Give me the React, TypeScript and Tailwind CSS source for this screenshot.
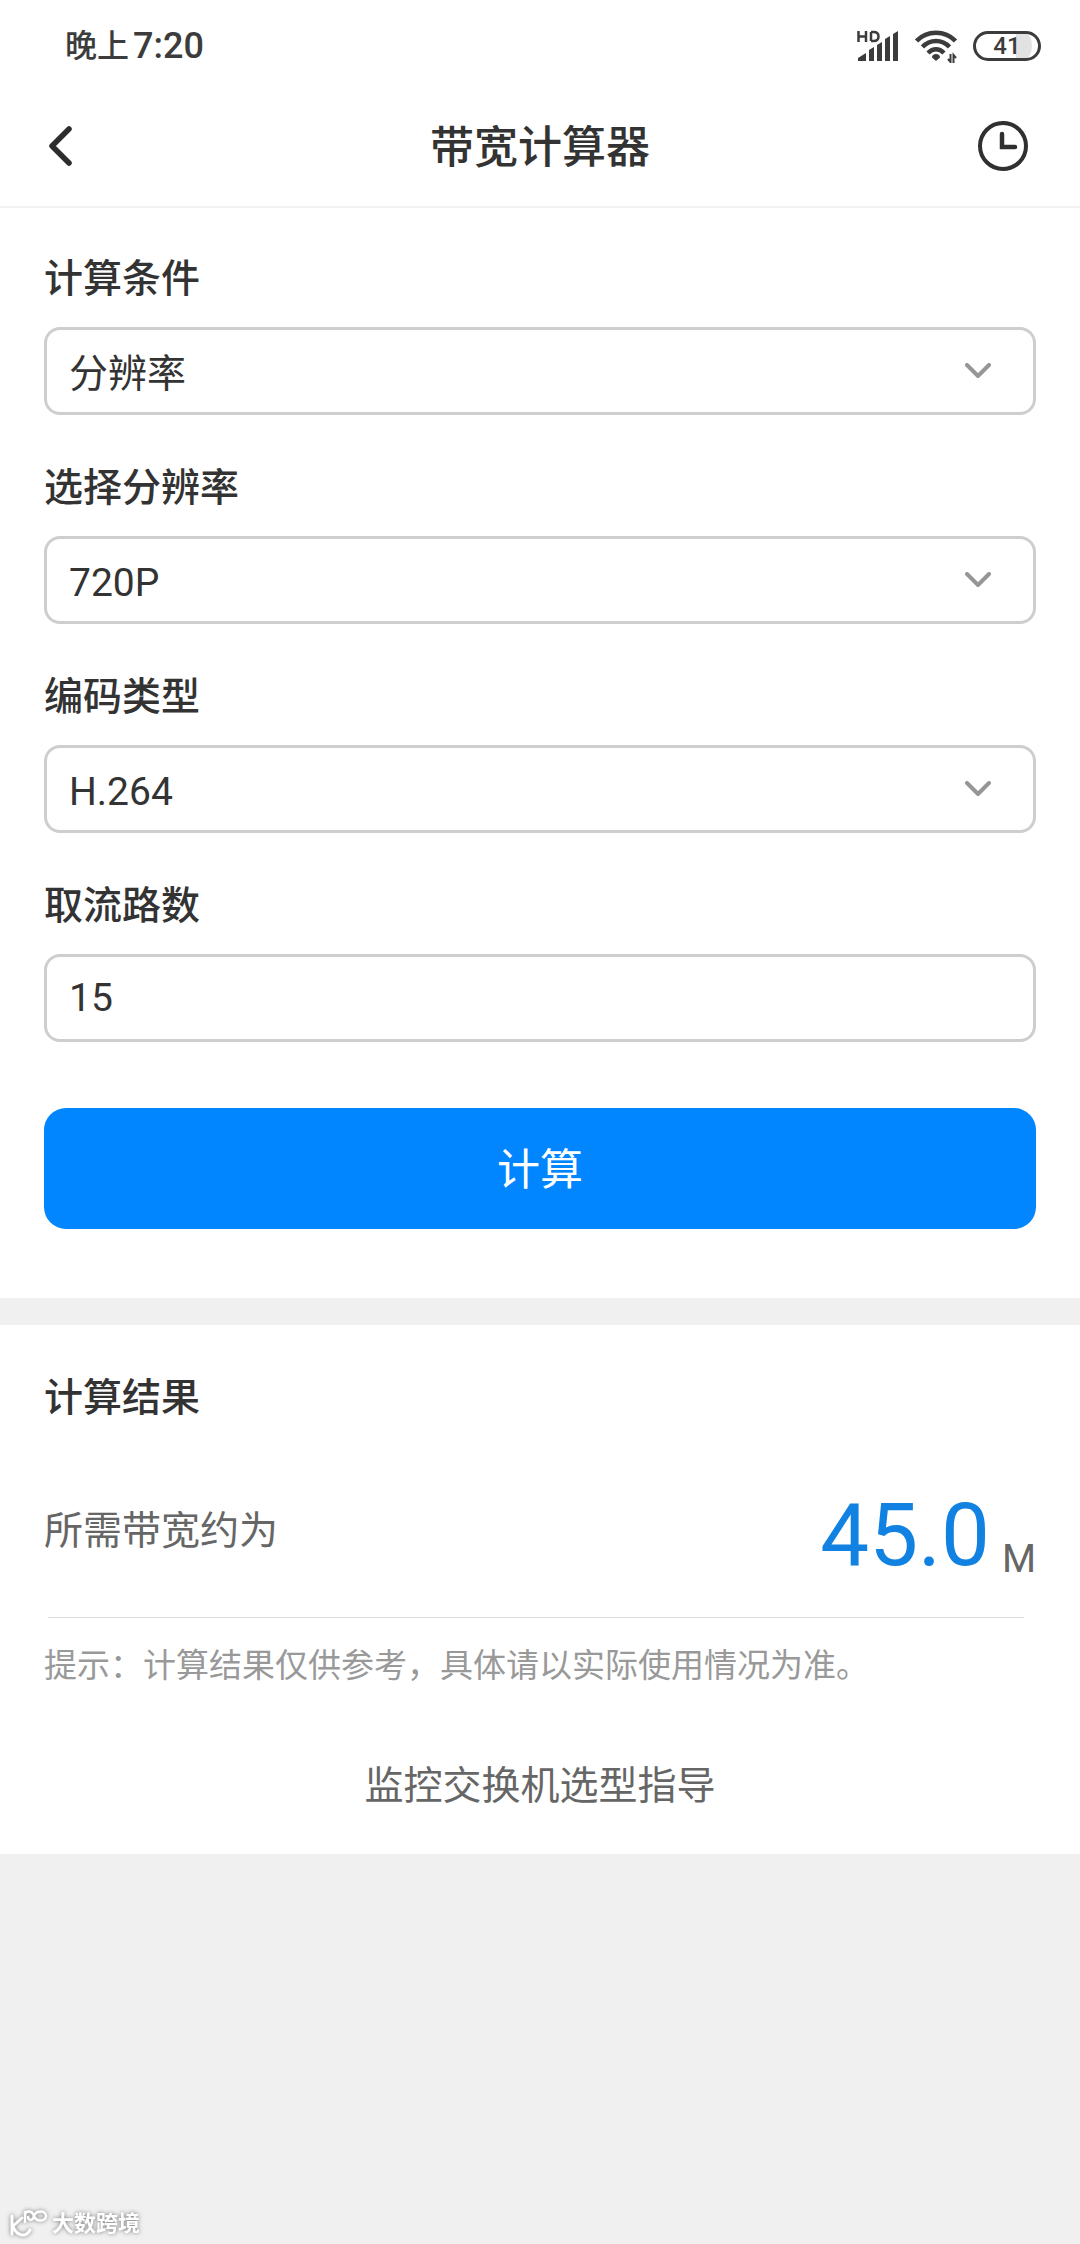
import React, { useState } from 'react';

const resolutions = ['720P', '1080P', '4MP', '4K'];
const encodings = ['H.264', 'H.265'];
const conditions = ['分辨率', '码率'];

const boxStyle =
  'w-full h-22 rounded-2xl border-[3px] border-[#cecece] bg-white px-[22px] text-[39px] text-[#333333] outline-none';

const StatusBar = () => {
  return (
    <div className="flex h-[86px] items-center justify-between pt-1.5 pr-[39px] pl-[65px] text-[#3c3c3c]">
      <div className="flex items-center gap-1 font-medium leading-10">
        <span className="text-[32px]">晚上</span>
        <span className="text-[36px]">7:20</span>
      </div>
      <div className="flex items-center gap-4">
        {/* 신호 */}
        <svg className="h-8 w-[42px]" viewBox="0 0 42 32" fill="currentColor">
          <path
            d="M1.500 1V12M9 1V12M1.500 6.500H9M14 2V11M14 2H16.500Q21.500 2 21.500 6.500T16.500 11H14"
            fill="none"
            stroke="currentColor"
            strokeWidth="2.500"
          />
          <path d="M1 31V28L9 23V31Z" />
          <path d="M12 31V20L17 17V31Z" />
          <path d="M20 31V15L25 12V31Z" />
          <path d="M28 31V9L33 6V31Z" />
          <path d="M36 31V4L41 1V31Z" />
        </svg>
        {/* 와이파이 */}
        <svg className="h-[34px] w-[42px]" viewBox="0 0 42 34">
          <g fill="none" stroke="currentColor" strokeWidth="4.500">
            <path d="M1.500 12C12 1 30 1 40.500 12" />
            <path d="M7.500 18C15 10 27 10 34.500 18" />
            <path d="M13 24C18 19 24 19 29 24" />
          </g>
          <path d="M21 25C23.500 25 25 26.500 25 28.500L21 32L17 28.500C17 26.500 18.500 25 21 25Z" fill="currentColor" />
          <path d="M35.500 25V33L33 30M38.500 34V26L41 29" fill="none" stroke="currentColor" strokeWidth="2" />
        </svg>
        <div className="flex h-[30px] w-17 items-center justify-center rounded-full border-[3px] border-current bg-linear-to-r from-white from-65% to-[#e2e2e2] to-65% bg-clip-content px-1.5 text-[24px] font-medium leading-6">
          41
        </div>
      </div>
    </div>
  );
};

type SelectFieldProps = {
  id: string;
  label: string;
  options: string[];
};

const SelectField = ({ id, label, options }: SelectFieldProps) => {
  const [value, setValue] = useState(options[0]);

  return (
    <div className="flex flex-col gap-5">
      <label htmlFor={id} className="text-[39px] font-medium leading-14">
        {label}
      </label>
      <div className="relative">
        <select
          id={id}
          value={value}
          onChange={(e) => setValue(e.target.value)}
          className={`${boxStyle} appearance-none pt-1.5`}
        >
          {options.map((option) => (
            <option key={option}>{option}</option>
          ))}
        </select>
        <svg
          className="pointer-events-none absolute top-9 right-11 h-4 w-7"
          viewBox="0 0 28 16"
          fill="none"
          stroke="#969696"
          strokeWidth="4"
          strokeLinecap="round"
          strokeLinejoin="round"
        >
          <path d="M3 2L14 13L25 2" />
        </svg>
      </div>
    </div>
  );
};

const App = () => {
  const [count, setCount] = useState('15');

  return (
    <div className="flex min-h-screen flex-col bg-[#f0f0f1] font-[Roboto,'Noto_Sans_CJK_SC',sans-serif] text-[#333333]">
      <header className="border-b-2 border-[#f2f2f2] bg-white">
        <StatusBar />
        <div className="grid h-30 grid-cols-[1fr_auto_1fr] items-center px-11">
          <button type="button" aria-label="返回" className="justify-self-start">
            <svg
              className="h-11 w-8"
              viewBox="0 0 32 44"
              fill="none"
              stroke="#2d2d2d"
              strokeWidth="5.500"
              strokeLinecap="round"
              strokeLinejoin="round"
            >
              <path d="M25 5L8 22L25 39" />
            </svg>
          </button>
          <h1 className="pt-1 text-[44px] font-medium leading-15">带宽计算器</h1>
          <button type="button" aria-label="历史记录" className="justify-self-end">
            <svg className="h-[50px] w-[66px]" viewBox="0 0 66 50" fill="none" stroke="#303030">
              <circle cx="33" cy="25" r="23" strokeWidth="4" />
              <path d="M32 13V26H45" strokeWidth="4.500" strokeLinecap="round" />
            </svg>
          </button>
        </div>
      </header>

      {/* 계산 조건 */}
      <form
        className="flex flex-col gap-[45px] bg-white px-11 pt-[43px] pb-[69px]"
        onSubmit={(e) => e.preventDefault()}
      >
        <SelectField id="condition" label="计算条件" options={conditions} />
        <SelectField id="resolution" label="选择分辨率" options={resolutions} />
        <SelectField id="encoding" label="编码类型" options={encodings} />
        <div className="flex flex-col gap-5">
          <label htmlFor="count" className="text-[39px] font-medium leading-14">
            取流路数
          </label>
          <input
            id="count"
            type="text"
            inputMode="numeric"
            value={count}
            onChange={(e) => setCount(e.target.value)}
            className={boxStyle}
          />
        </div>
        <button
          type="submit"
          className="mt-[21px] h-[121px] w-full rounded-[22px] bg-[#0186ff] pt-1 text-[43px] text-white"
        >
          计算
        </button>
      </form>

      {/* 계산 결과 */}
      <section className="mt-[27px] bg-white px-11 pt-[45px] pb-10">
        <h2 className="text-[39px] font-medium leading-14">计算结果</h2>
        <div className="mt-[69px] flex items-start justify-between">
          <span className="text-[39px] leading-18 text-[#666666]">所需带宽约为</span>
          <p className="flex items-end gap-3">
            <span className="mb-1 text-[87px] leading-20 text-[#1282e2]">45.0</span>
            <span className="text-[39px] leading-10 text-[#666666]">M</span>
          </p>
        </div>
        <hr className="mt-[38px] mr-3 ml-1 border-[#dedede]" />
        <p className="mt-6 text-[33px] leading-12 text-[#999999]">
          提示：计算结果仅供参考，具体请以实际使用情况为准。
        </p>
        <a href="#guide" className="mt-17 block text-center text-[39px] leading-14 text-[#666666]">
          监控交换机选型指导
        </a>
      </section>

      <footer className="mt-auto flex items-center gap-1 pb-1 pl-2 text-white drop-shadow-[0_0_2px_#777777]">
        <svg
          className="h-8 w-10"
          viewBox="0 0 40 32"
          fill="none"
          stroke="currentColor"
          strokeWidth="3"
          strokeLinecap="round"
        >
          <path d="M4 8V26M14 10L5 18C8 28 18 30 22 22" />
          <path
            d="M17 14V4M17 8C17 2 24 2 26 8C28 14 38 14 38 8S28 2 26 8C25 13 20 13 20 9"
            strokeWidth="2.500"
          />
        </svg>
        <span className="text-[22px] font-bold leading-8">大数跨境</span>
      </footer>
    </div>
  );
};

export default App;
